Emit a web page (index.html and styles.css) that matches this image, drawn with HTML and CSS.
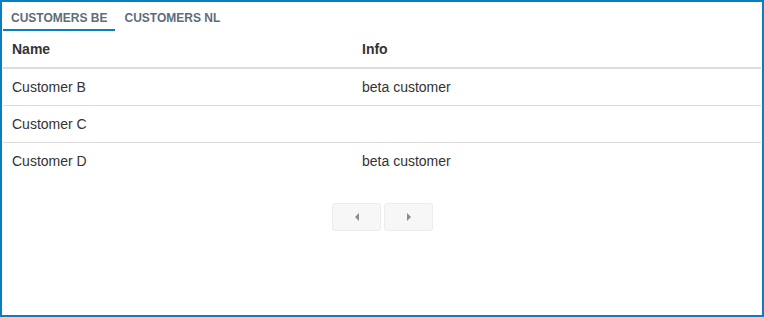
FILE: index.html
```html
<!DOCTYPE html>
<html lang="en">
<head>
    <meta charset="UTF-8">
    <title>Customers</title>
    <link rel="stylesheet" href="styles.css">
</head>
<body>
    <div class="frame">
        <div class="tabs">
            <div class="tab active">Customers BE</div>
            <div class="tab">Customers NL</div>
        </div>

        <table class="grid">
            <thead>
                <tr>
                    <th class="col-name">Name</th>
                    <th>Info</th>
                </tr>
            </thead>
            <tbody>
                <tr>
                    <td>Customer B</td>
                    <td>beta customer</td>
                </tr>
                <tr>
                    <td>Customer C</td>
                    <td></td>
                </tr>
                <tr>
                    <td>Customer D</td>
                    <td>beta customer</td>
                </tr>
            </tbody>
        </table>

        <div class="pager">
            <button class="page-btn" aria-label="previous"><span class="arrow left"></span></button>
            <button class="page-btn" aria-label="next"><span class="arrow right"></span></button>
        </div>
    </div>
</body>
</html>
```

FILE: styles.css
```css
html, body {
    margin: 0;
    height: 100%;
}
body {
    font-family: "Liberation Sans", Arial, sans-serif;
    font-size: 14px;
    color: #333;
    background: #fff;
}
.frame {
    box-sizing: border-box;
    height: 100vh;
    border: 2px solid #0a7fc0;
    padding: 0 1px;
}

/* tabs */
.tabs {
    display: flex;
    height: 29px;
}
.tab {
    box-sizing: border-box;
    height: 29px;
    padding: 9px 8px 0;
    margin-right: 1px;
    font-size: 12px;
    font-weight: bold;
    line-height: 14px;
    text-transform: uppercase;
    color: #5d6d7a;
    border-bottom: 2px solid transparent;
}
.tab.active {
    border-bottom-color: #0a7fc0;
}

/* table */
.grid {
    width: 100%;
    border-collapse: collapse;
}
.grid th,
.grid td {
    text-align: left;
    padding: 0 9px;
    height: 36px;
    line-height: 16px;
}
.grid th {
    font-weight: bold;
    border-bottom: 2px solid #dcdcdc;
}
.grid td {
    border-bottom: 1px solid #dcdcdc;
}
.grid tbody tr:last-child td {
    border-bottom: none;
}
.col-name {
    width: 332px;
}

/* pager */
.pager {
    display: flex;
    justify-content: center;
    gap: 3px;
    margin-top: 24px;
    padding-left: 1px;
}
.page-btn {
    box-sizing: border-box;
    width: 49px;
    height: 28px;
    padding: 0;
    background: #f7f7f7;
    border: 1px solid #ececec;
    border-radius: 3px;
    display: flex;
    align-items: center;
    justify-content: center;
}
.arrow {
    width: 0;
    height: 0;
    border-top: 4px solid transparent;
    border-bottom: 4px solid transparent;
}
.arrow.left {
    border-right: 4px solid #8c8c8c;
}
.arrow.right {
    border-left: 4px solid #8c8c8c;
}
```
